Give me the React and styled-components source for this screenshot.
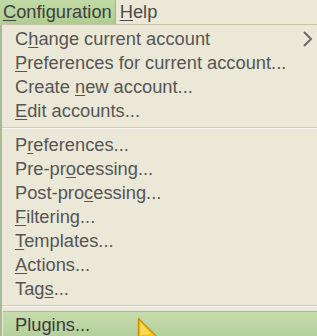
import React from 'react';
import styled, { createGlobalStyle } from 'styled-components';

const GlobalStyle = createGlobalStyle`
  html, body {
    margin: 0;
    padding: 0;
    background: #ece8d8;
    overflow: hidden;
  }
  body {
    font-family: "Liberation Sans", Arial, sans-serif;
  }
`;

const Screen = styled.div`
  position: relative;
  width: 317px;
  height: 336px;
  background: #ece8d8;
  overflow: hidden;
`;

const MenuBar = styled.div`
  display: flex;
  height: 24px;
  border-bottom: 1px solid #cbc4a9;
  background: #ece8d8;
`;

const BarItem = styled.div`
  display: flex;
  align-items: center;
  height: 24px;
  padding: 0 3px 0 3px;
  margin-right: 1px;
  font-size: 18.3px;
  color: #4a4a4a;
  box-sizing: border-box;
  white-space: pre;
  ${p => p.active && `
    background: linear-gradient(#c2dba6, #aecd91);
    border-right: 1px solid #9fb88a;
    padding-right: 3px;
    color: #3f3f3f;
  `}
`;

const Menu = styled.div`
  display: flex;
  flex-direction: column;
  border-left: 2px solid #a9b994;
  background: #ece8d8;
  padding-top: 2px;
`;

const Item = styled.div`
  position: relative;
  display: flex;
  align-items: center;
  height: 24px;
  padding-left: 13px;
  font-size: 18.3px;
  color: #555555;
  white-space: pre;
  ${p => p.active && `
    margin-left: 1px;
    padding-left: 12px;
    background: linear-gradient(#c6dcae, #b3cf98);
    border-top: 1px solid #a7b99a;
    height: 25px;
    color: #3c3c3c;
  `}
`;

const Ul = styled.span`
  text-decoration: underline;
  text-underline-offset: 2px;
  text-decoration-thickness: 1px;
`;

const Separator = styled.div`
  height: 2px;
  margin: 4px 0 4px 0;
  border-top: 1px solid #d3cdb8;
  border-bottom: 1px solid #f6f4ec;
  box-sizing: border-box;
`;

const Arrow = styled.svg`
  position: absolute;
  right: 2px;
  top: 4px;
`;

const Cursor = styled.svg`
  position: absolute;
  left: 137px;
  top: 317px;
`;

const label = (text, idx) =>
  idx < 0 ? <span>{text}</span> : (
    <span>
      {text.slice(0, idx)}
      <Ul>{text[idx]}</Ul>
      {text.slice(idx + 1)}
    </span>
  );

const group1 = [
  ['Change current account', 1, true],
  ['Preferences for current account...', 0],
  ['Create new account...', 7],
  ['Edit accounts...', 0],
];

const group2 = [
  ['Preferences...', 1],
  ['Pre-processing...', 6],
  ['Post-processing...', 8],
  ['Filtering...', 0],
  ['Templates...', 0],
  ['Actions...', 0],
  ['Tags...', 3],
];

export default function App() {
  return (
    <Screen>
      <GlobalStyle />
      <MenuBar>
        <BarItem active>{label('Configuration', 0)}</BarItem>
        <BarItem>{label('Help', 0)}</BarItem>
      </MenuBar>
      <Menu>
        {group1.map(([t, i, sub]) => (
          <Item key={t}>
            {label(t, i)}
            {sub && (
              <Arrow width="14" height="16" viewBox="0 0 14 16">
                <path d="M3 1 L10 8 L3 15" fill="none" stroke="#6a6a6a" strokeWidth="2" />
              </Arrow>
            )}
          </Item>
        ))}
        <Separator />
        {group2.map(([t, i]) => (
          <Item key={t}>{label(t, i)}</Item>
        ))}
        <Separator />
        <Item active>{label('Plugins...', -1)}</Item>
      </Menu>
      <Cursor width="24" height="24" viewBox="0 0 24 24">
        <path d="M1.5 1.5 L1.5 22 L20 20 Z" fill="#f4c21a" stroke="#c58d06" strokeWidth="1.2" strokeLinejoin="round" />
        <path d="M3.5 5 L3.5 18 L14 17 Z" fill="#fde37a" opacity="0.7" />
      </Cursor>
    </Screen>
  );
}
